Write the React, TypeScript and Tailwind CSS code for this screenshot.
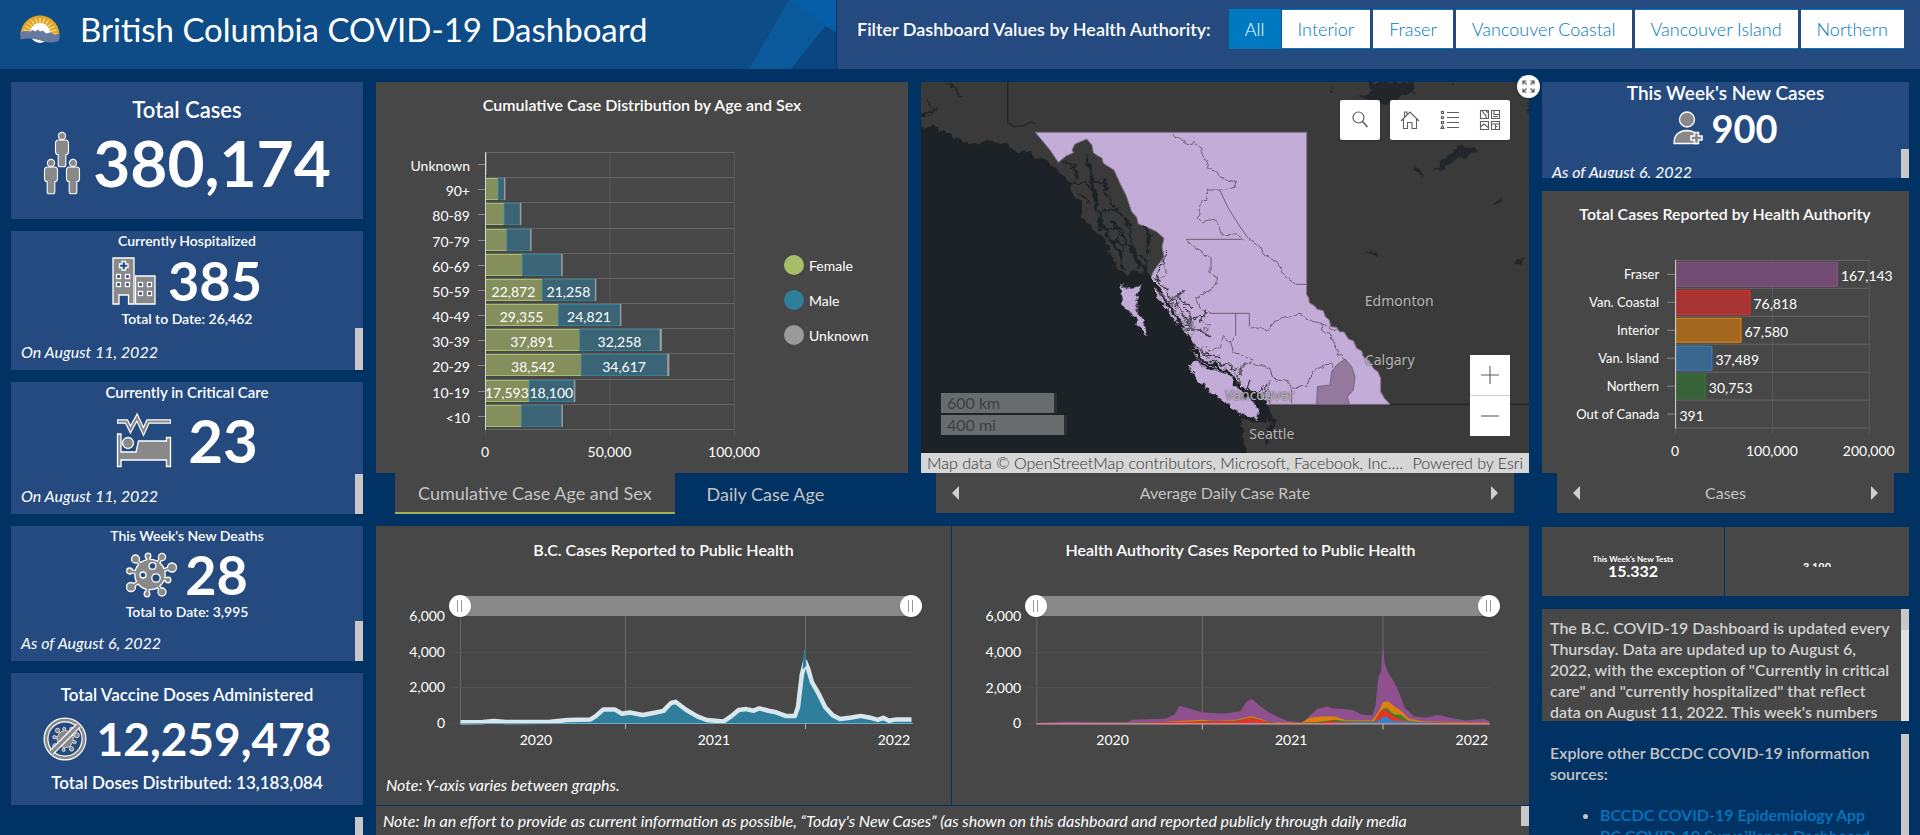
import React from "react";

type Pt = [number, number];

/* ---------- shared pieces ---------- */

function ScrollThumb({ className }: { className: string }) {
  return <div aria-hidden="true" className={"absolute right-0 w-2 bg-[#c8c8c8] " + className} />;
}

const iconStroke = { fill: "#898989", stroke: "#fff", strokeWidth: 1.3 };

function PersonShape({ x, y }: { x: number; y: number }) {
  return (
    <g transform={`translate(${x} ${y})`} {...iconStroke} strokeWidth={1.1}>
      <path d="M3.5 8h7q3 0 3 3.500v8q0 3-2.700 3.200v10q0 2-2 2h-3.600q-2 0-2-2v-10q-2.700-.2-2.700-3.200v-8q0-3.500 3-3.500z" />
      <circle cx="7" cy="4" r="3.600" />
    </g>
  );
}

function PeopleIcon() {
  return (
    <svg width="38" height="64" viewBox="0 0 38 64" aria-hidden="true">
      <PersonShape x={12} y={1} />
      <PersonShape x={1} y={28} />
      <PersonShape x={23} y={28} />
    </svg>
  );
}

function HospitalIcon() {
  const windows: Pt[] = [[4, 17], [13, 17], [4, 25], [13, 25], [26, 25], [35, 25], [26, 34], [35, 34]];
  return (
    <svg width="44" height="48" viewBox="0 0 44 48" aria-hidden="true">
      <g {...iconStroke}>
        <path d="M1 1h21v46h-5.500v-9h-9.500v9h-6z" />
        <path d="M23.500 19h19.500v28h-19.500z" />
      </g>
      <path d="M10 4.500h3.500v2.500h2.500v3.500h-2.500v2.500h-3.500v-2.500h-2.500v-3.500h2.500z" fill="#244a80" stroke="#fff" strokeWidth="1.300" />
      {windows.map(([x, y]) => (
        <rect key={`${x}-${y}`} x={x + 0.5} y={y + 0.5} width="4" height="4" fill="#244a80" stroke="#fff" strokeWidth="1.300" />
      ))}
    </svg>
  );
}

function CriticalIcon() {
  return (
    <svg width="56" height="56" viewBox="0 0 56 56" aria-hidden="true">
      <path d="M1 9.500h9.500l4 8 6.500-12 6.500 14 4.500-10h23" fill="none" stroke="#fff" strokeWidth="4.400" strokeLinejoin="miter" />
      <path d="M2 9.500h8.500l4 8 6.500-12 6.500 14 4.500-10h22" fill="none" stroke="#898989" strokeWidth="2" />
      <g {...iconStroke}>
        <path d="M1.500 22h3.500v18h15l2.500-11h28v-3.500h4v29h-4v-6.500h-45.500v6.500h-3.500z" />
        <circle cx="12" cy="31" r="5.500" />
      </g>
    </svg>
  );
}

function VirusShape({ dots = true }: { dots?: boolean }) {
  const knobs: [number, number, number][] = [
    [22, 4, 2.8], [36, 5, 3.6], [46, 15.500, 4.5], [42, 28, 2.8], [36, 40, 4],
    [21, 42, 2.8], [5, 35, 4.5], [3.6, 19, 3], [9.500, 7, 4],
  ];
  return (
    <g>
      {knobs.map(([x, y, r]) => (
        <g key={`${x}-${y}`}>
          <line x1="24" y1="22.500" x2={x} y2={y} stroke="#fff" strokeWidth="4" />
          <circle cx={x} cy={y} r={r} {...iconStroke} />
        </g>
      ))}
      <circle cx="24" cy="22.500" r="15.200" {...iconStroke} />
      {knobs.map(([x, y]) => (
        <line key={`i${x}`} x1="24" y1="22.500" x2={x} y2={y} stroke="#898989" strokeWidth="1.800" />
      ))}
      {dots && (
        <g fill="#244a80" stroke="#fff" strokeWidth="1.300">
          <circle cx="26.500" cy="14" r="3.400" />
          <circle cx="17" cy="23" r="3" />
          <circle cx="30" cy="26" r="4.200" />
        </g>
      )}
    </g>
  );
}

function VirusIcon() {
  return (
    <svg width="51" height="46" viewBox="0 0 51 46" aria-hidden="true">
      <VirusShape />
    </svg>
  );
}

function VaccineIcon() {
  return (
    <svg width="44" height="44" viewBox="0 0 44 44" aria-hidden="true">
      <g transform="translate(9.500 9.500) scale(.53 .56)">
        <VirusShape dots={false} />
      </g>
      <circle cx="22" cy="22" r="19" fill="none" stroke="#fff" strokeWidth="5" />
      <circle cx="22" cy="22" r="19" fill="none" stroke="#898989" strokeWidth="2.600" />
      <path d="M8.500 35.500l27-27" stroke="#fff" strokeWidth="6" />
      <path d="M8 36l28-28" stroke="#898989" strokeWidth="3.200" />
    </svg>
  );
}

function NewCaseIcon() {
  return (
    <svg width="30" height="34" viewBox="0 0 30 34" aria-hidden="true">
      <g {...iconStroke}>
        <circle cx="14" cy="8.500" r="7.500" />
        <path d="M1 32.500q0-12.500 13-13 9 .5 10 6v7z" />
      </g>
      <path d="M21.500 21.500h4v3.500h3.500v4h-3.500v3.500h-4v-3.500h-3.500v-4h3.500z" fill="#898989" stroke="#fff" strokeWidth="1.500" />
    </svg>
  );
}

function LogoIcon() {
  const rays = Array.from({ length: 13 }, (_, i) => (i * Math.PI) / 12);
  return (
    <svg width="40" height="28" viewBox="0 0 40 28" aria-hidden="true">
      <path d="M.5 20a19.500 19.500 0 0 1 39 0z" fill="#e3a521" />
      {rays.map((a) => (
        <line key={a} x1="20" y1="19" x2={20 - 17 * Math.cos(a)} y2={19 - 16 * Math.sin(a)} stroke="#fff3d0" strokeWidth="1" />
      ))}
      <circle cx="20" cy="18" r="10" fill="#fff" />
      <path d="M.5 17.500q5-3 9.500-1l3-1.500 2 1.500 3-2 2 2 3-1 3 3 4-1 5 2 4.500-1v5q0 3-4 3.500-8 1.500-15-1.500-10-3.500-20-1z" fill="#66799f" />
    </svg>
  );
}

/* ---------- left column ---------- */

type StatProps = {
  title: string;
  value: string;
  total?: string;
  note?: string;
  icon: React.ReactNode;
  titleClass: string;
  valueClass: string;
  totalClass?: string;
  thumb?: string;
};

function StatCard(p: StatProps) {
  return (
    <section className="relative flex min-h-0 flex-col overflow-hidden bg-[#244a80] text-white">
      <h2 className={"text-center font-semibold " + p.titleClass}>{p.title}</h2>
      <div className={"flex items-center justify-center font-bold " + p.valueClass}>
        {p.icon}
        <span>{p.value}</span>
      </div>
      {p.total && <p className={"text-center font-semibold " + (p.totalClass ?? "")}>{p.total}</p>}
      {p.note && <p className="mt-auto mb-1.5 pl-2.5 text-base leading-6 italic">{p.note}</p>}
      {p.thumb && <ScrollThumb className={p.thumb} />}
    </section>
  );
}

/* ---------- age and sex chart ---------- */

const ages: { label: string; f: number; m: number; u: number }[] = [
  { label: "Unknown", f: 0, m: 0, u: 300 },
  { label: "90+", f: 5100, m: 2500, u: 200 },
  { label: "80-89", f: 7500, m: 6500, u: 200 },
  { label: "70-79", f: 8600, m: 9500, u: 200 },
  { label: "60-69", f: 14900, m: 15700, u: 300 },
  { label: "50-59", f: 22872, m: 21258, u: 400 },
  { label: "40-49", f: 29355, m: 24821, u: 500 },
  { label: "30-39", f: 37891, m: 32258, u: 900 },
  { label: "20-29", f: 38542, m: 34617, u: 900 },
  { label: "10-19", f: 17593, m: 18100, u: 300 },
  { label: "<10", f: 14500, m: 16200, u: 300 },
];

function AgeChart() {
  const x0 = 109;
  const k = 249 / 100000;
  const top = 70;
  const row = 277 / 11;
  return (
    <svg viewBox="0 0 532 391" className="h-full w-full" role="img" aria-label="Cumulative Case Distribution by Age and Sex">
      <text x="266" y="29" textAnchor="middle" className="fill-white text-[16px] font-semibold">Cumulative Case Distribution by Age and Sex</text>
      {[0, 50000, 100000].map((v) => (
        <g key={v}>
          <line x1={x0 + v * k + 0.5} x2={x0 + v * k + 0.5} y1={top} y2="353" stroke="#5a5a5a" />
          <text x={x0 + v * k} y="375" textAnchor="middle" className="fill-white text-[14px]">{v.toLocaleString("en-US")}</text>
        </g>
      ))}
      {Array.from({ length: 12 }, (_, i) => (
        <line key={i} x1={x0} x2="358" y1={Math.round(top + i * row) + 0.5} y2={Math.round(top + i * row) + 0.5} stroke="#656565" />
      ))}
      {ages.map((a, i) => {
        const y = Math.round(top + i * row) + 1.5;
        const wf = a.f * k;
        const wm = a.m * k;
        return (
          <g key={a.label}>
            <line x1={x0 - 7} x2={x0} y1={y + 11} y2={y + 11} stroke="#8a8a8a" />
            <text x={x0 - 15} y={y + 17} textAnchor="end" className="fill-white text-[14px]">{a.label}</text>
            {a.f > 0 && <rect x={x0 + 0.5} y={y} width={wf} height="21" fill="#858e5d" stroke="#a8bd68" />}
            {a.m > 0 && <rect x={x0 + wf + 0.5} y={y} width={wm} height="21" fill="#3b6576" stroke="#2f7e9b" />}
            <rect x={x0 + wf + wm} y={y - 0.5} width={Math.max(1.5, a.u * k)} height="22" fill="#9a9a9a" />
            {a.f > 17000 && <text x={x0 + wf / 2} y={y + 17} textAnchor="middle" className="fill-white text-[14px]">{a.f.toLocaleString("en-US")}</text>}
            {a.m > 17000 && <text x={x0 + wf + wm / 2} y={y + 17} textAnchor="middle" className="fill-white text-[14px]">{a.m.toLocaleString("en-US")}</text>}
          </g>
        );
      })}
      <line x1={x0 + 0.5} x2={x0 + 0.5} y1={top} y2="348" stroke="#d6d6d6" />
      {[["Female", "#a8bd68"], ["Male", "#2f7e9b"], ["Unknown", "#9a9a9a"]].map(([label, color], i) => (
        <g key={label}>
          <circle cx="418" cy={183 + i * 35} r="10" fill={color} />
          <text x="433" y={189 + i * 35} className="fill-white text-[14px]">{label}</text>
        </g>
      ))}
    </svg>
  );
}

/* ---------- health authority chart ---------- */

const authorities: { label: string; v: number; fill: string; stroke: string }[] = [
  { label: "Fraser", v: 167143, fill: "#734c73", stroke: "#8b5289" },
  { label: "Van. Coastal", v: 76818, fill: "#a83432", stroke: "#ee2b27" },
  { label: "Interior", v: 67580, fill: "#a4671f", stroke: "#e8860f" },
  { label: "Van. Island", v: 37489, fill: "#3a678e", stroke: "#3484c4" },
  { label: "Northern", v: 30753, fill: "#386238", stroke: "#2f7a33" },
  { label: "Out of Canada", v: 391, fill: "#cccccc", stroke: "#cccccc" },
];

function AuthorityChart() {
  const x0 = 133;
  const k = 194 / 200000;
  return (
    <svg viewBox="0 0 367 282" className="h-full w-full" role="img" aria-label="Total Cases Reported by Health Authority">
      <text x="183" y="29" textAnchor="middle" className="fill-white text-[16px] font-semibold">Total Cases Reported by Health Authority</text>
      {[0, 100000, 200000].map((v) => (
        <g key={v}>
          <line x1={x0 + v * k + 0.5} x2={x0 + v * k + 0.5} y1="69" y2="244" stroke="#5a5a5a" />
          <text x={x0 + v * k} y="266" textAnchor="middle" className="fill-white text-[14px]">{v.toLocaleString("en-US")}</text>
        </g>
      ))}
      {Array.from({ length: 7 }, (_, i) => (
        <line key={i} x1={x0} x2="327" y1={69.5 + i * 28} y2={69.5 + i * 28} stroke="#656565" />
      ))}
      {authorities.map((a, i) => (
        <g key={a.label}>
          <line x1={x0 - 8} x2={x0} y1={83.5 + i * 28} y2={83.5 + i * 28} stroke="#8a8a8a" />
          <text x="117" y={88 + i * 28} textAnchor="end" className="fill-white text-[13px]">{a.label}</text>
          {a.v > 1000 && <rect x={x0 + 0.5} y={71.5 + i * 28} width={a.v * k} height="24" fill={a.fill} stroke={a.stroke} />}
          <text x={x0 + a.v * k + 4} y={90 + i * 28} className="fill-white text-[14px]">{a.v.toLocaleString("en-US")}</text>
        </g>
      ))}
      <line x1={x0 + 0.5} x2={x0 + 0.5} y1="69" y2="238" stroke="#d6d6d6" />
    </svg>
  );
}

/* ---------- time series charts ---------- */

/* x runs 0..1200 over the plot width, y is a case count */
const bcLine: Pt[] = [
  [0, 40], [60, 60], [90, 110], [120, 60], [240, 70], [285, 160], [345, 190], [360, 380], [380, 760], [410, 760],
  [430, 520], [450, 590], [485, 450], [520, 590], [540, 680], [560, 1120], [572, 1190], [600, 740], [630, 370],
  [655, 170], [700, 90], [720, 370], [740, 730], [760, 780], [780, 690], [795, 820], [820, 690], [840, 600],
  [865, 400], [890, 400], [898, 900], [908, 2700], [917, 3450], [925, 3050], [935, 2300], [955, 1560], [970, 900],
  [990, 440], [1010, 220], [1040, 310], [1065, 400], [1090, 300], [1110, 180], [1125, 290], [1140, 130], [1160, 200], [1200, 190],
];
const bcSpikes: Pt[] = [
  [895, 0], [900, 1900], [904, 2600], [910, 3000], [914, 4100], [918, 4100], [920, 3200], [935, 2600], [945, 2300],
  [955, 1800], [965, 1300], [980, 800], [1000, 0],
];
const stacks: { color: string; pts: Pt[] }[] = [
  {
    color: "#8f5090",
    pts: [
      [0, 20], [70, 90], [115, 90], [240, 60], [255, 200], [340, 250], [365, 480], [378, 980], [395, 880], [420, 730],
      [440, 620], [470, 560], [500, 550], [540, 680], [555, 1200], [570, 1380], [590, 1000], [615, 630], [635, 400],
      [665, 130], [705, 70], [725, 450], [745, 820], [770, 950], [785, 830], [810, 820], [840, 730], [860, 500],
      [890, 440], [898, 1000], [906, 2600], [913, 2900], [916, 4100], [919, 4100], [922, 3400], [930, 2900],
      [945, 2400], [960, 1750], [975, 900], [1000, 390], [1030, 310], [1065, 480], [1090, 350], [1135, 160], [1185, 260], [1200, 110],
    ],
  },
  {
    color: "#dd8208",
    pts: [
      [0, 10], [310, 30], [370, 130], [440, 200], [470, 150], [520, 180], [550, 300], [570, 410], [590, 260], [620, 80],
      [700, 30], [725, 310], [755, 380], [790, 380], [820, 170], [890, 170], [905, 630], [918, 1190], [932, 1230],
      [950, 920], [965, 720], [985, 290], [1020, 110], [1200, 30],
    ],
  },
  {
    color: "#3a7d35",
    pts: [
      [0, 0], [400, 60], [440, 130], [520, 130], [570, 330], [600, 140], [640, 20], [740, 60], [790, 200], [820, 110],
      [895, 110], [912, 700], [928, 880], [940, 620], [950, 500], [965, 480], [985, 150], [1020, 60], [1200, 10],
    ],
  },
  {
    color: "#ee2f22",
    pts: [
      [0, 20], [270, 20], [370, 90], [530, 120], [560, 290], [580, 240], [620, 40], [750, 40], [780, 130], [830, 50],
      [895, 80], [910, 620], [925, 780], [940, 480], [955, 300], [975, 180], [990, 30], [1200, 30],
    ],
  },
  {
    color: "#2e86cc",
    pts: [[560, 0], [570, 60], [590, 0], [770, 0], [800, 50], [900, 90], [915, 320], [927, 400], [940, 160], [1010, 60], [1100, 0]],
  },
];

const px = (x: number) => 84.5 + (x * 451) / 1200;
const py = (v: number) => 107 - (v * 107) / 6000 + 1;
const toPoints = (pts: Pt[]) => pts.map(([x, v]) => `${px(x).toFixed(1)},${py(v).toFixed(1)}`).join(" ");
const toArea = (pts: Pt[]) => `${px(pts[0][0])},108 ${toPoints(pts)} ${px(pts[pts.length - 1][0])},108`;

const thumbClass =
  "pointer-events-none absolute inset-0 m-0 w-full appearance-none bg-transparent [&::-webkit-slider-thumb]:pointer-events-auto [&::-webkit-slider-thumb]:size-[22px] [&::-webkit-slider-thumb]:appearance-none [&::-webkit-slider-thumb]:rounded-full [&::-webkit-slider-thumb]:bg-white [&::-webkit-slider-thumb]:bg-[linear-gradient(90deg,transparent_8px,#999_8px,#999_9px,transparent_9px,transparent_12px,#999_12px,#999_13px,transparent_13px)] [&::-webkit-slider-thumb]:bg-[length:22px_12px] [&::-webkit-slider-thumb]:bg-center [&::-webkit-slider-thumb]:bg-no-repeat [&::-webkit-slider-thumb]:shadow";

function SeriesPanel({ title, note, children }: { title: string; note?: string; children: React.ReactNode }) {
  return (
    <section className="flex min-w-0 flex-col overflow-hidden bg-[#474747] text-white">
      <h2 className="pt-3 text-center text-base leading-6 font-semibold">{title}</h2>
      <div className="relative mr-[5%] ml-[12.7%] mt-8 h-6">
        <div className="absolute inset-x-[11px] top-0.5 h-5 bg-[#898989]" />
        <input type="range" min={0} max={100} defaultValue={0} aria-label={title + " range start"} className={thumbClass} />
        <input type="range" min={0} max={100} defaultValue={100} aria-label={title + " range end"} className={thumbClass} />
      </div>
      <svg viewBox="0 0 575 140" className="-mt-[3px] w-full shrink-0 overflow-visible" role="img" aria-label={title}>
        {[249, 429].map((x) => (
          <line key={x} x1={x + 0.5} x2={x + 0.5} y1="0" y2="114" stroke="#6e6e6e" />
        ))}
        <line x1="84.500" x2="84.500" y1="0" y2="108" stroke="#666" />
        {[6000, 4000, 2000, 0].map((v) => (
          <g key={v}>
            {v < 6000 && <line x1="77" x2="536" y1={Math.round(py(v)) + 0.5} y2={Math.round(py(v)) + 0.5} stroke="#525252" />}
            <text x="69" y={py(v) + 5} textAnchor="end" className="fill-white text-[14px]">{v.toLocaleString("en-US")}</text>
          </g>
        ))}
        {children}
        {[249, 429].map((x) => (
          <line key={x} x1={x + 0.5} x2={x + 0.5} y1="108" y2="114" stroke="#b0b0b0" />
        ))}
        <text x="160" y="130" textAnchor="middle" className="fill-white text-[14px]">2020</text>
        <text x="338" y="130" textAnchor="middle" className="fill-white text-[14px]">2021</text>
        <text x="518" y="130" textAnchor="middle" className="fill-white text-[14px]">2022</text>
      </svg>
      {note && <p className="mt-auto mb-2 pl-2.5 text-base leading-6 italic">{note}</p>}
    </section>
  );
}

/* ---------- map ---------- */

function ProvinceMap() {
  return (
    <svg viewBox="0 0 1824 1173" preserveAspectRatio="xMidYMin slice" className="absolute inset-0 h-full w-full" role="img" aria-label="Map of British Columbia">
      <defs>
        <filter id="coast" x="-5%" y="-5%" width="110%" height="110%">
          <feTurbulence type="fractalNoise" baseFrequency="0.045" numOctaves="3" seed="4" />
          <feDisplacementMap in="SourceGraphic" scale="26" xChannelSelector="R" yChannelSelector="G" />
        </filter>
        <filter id="border" x="-5%" y="-5%" width="110%" height="110%">
          <feTurbulence type="fractalNoise" baseFrequency="0.05" numOctaves="2" seed="9" />
          <feDisplacementMap in="SourceGraphic" scale="16" xChannelSelector="R" yChannelSelector="G" />
        </filter>
      </defs>
      <rect width="1824" height="1173" fill="#393a39" />
      <path d="M260 0V122l20 12 30-4 20-10 14 6" fill="none" stroke="#222627" strokeWidth="4" />
      <g transform="translate(357 144)">
        <path d="M690 823H1470" stroke="#252829" strokeWidth="5" />
        <path d="M-14 7H800V495L806 502 808 518 824 528 832 538 850 542 856 560 868 570 872 590 890 592 898 605 912 606 926 628 940 632 950 655 965 663 970 680 988 692 1000 715 1014 726 1022 745 1022 785 1034 806 1050 823H640L560 745 470 690 445 620 400 570 340 500 330 450 340 425 372 380 366 350 372 325 350 305 318 290 295 282 290 262 275 245 258 195 240 160 222 120 190 100 186 84 174 78 160 68 156 45 140 27 105 42 96 60 100 68 78 78 55 97 30 60Z" fill="#c4acd9" stroke="#807488" strokeWidth="3" />
        <g filter="url(#coast)">
          <path d="M-370-65-350-10-320-14-300 0-250 20-225 38-190 42-140 32-100 45-65 70-30 62-20 84 0 82 50 118 82 150 95 165 95 192 120 220 128 262 150 285 172 312 195 325 212 370 225 402 245 425 265 432 290 420 325 430 345 455 345 495 370 530 400 565 430 590 450 615 455 660 475 695 520 715 570 732 600 765 640 790 680 815 690 850 680 880 640 870 600 870 605 915 622 970 640 1040H-370Z" fill="#1e2426" />
        </g>
        <g filter="url(#coast)" fill="none" stroke="#1e2426" strokeLinecap="round" strokeLinejoin="round">
          <path d="M75 98 105 110 115 145M140 75 155 130 165 190 175 240 180 300M165 158 190 160M100 165 140 155 160 200M120 190 150 220M195 145 200 190 215 220 230 240M180 250 210 235 250 255 270 290M200 300 240 300 260 330 250 370M270 300 275 340 290 375 295 410M310 290 330 320 325 370M225 330 250 345M215 270 235 310 225 350M300 380 320 390 318 415" strokeWidth="6" />
          <path d="M150 110 158 170 170 230M178 270 205 320 240 370 250 410M265 340 290 390 320 425" strokeWidth="9" />
          <path d="M345 460 385 530 425 580 455 640 480 690 560 722 600 770 650 800" strokeWidth="10" />
          <path d="M-270-140-240-100M-340-90-310-60-350-40M-360-40-325-50" strokeWidth="5" />
          <path d="M680 830 690 860 695 890 685 900M700 870 692 915 680 935" strokeWidth="9" />
          <path d="M600 845 640 868 680 860" strokeWidth="18" />
        </g>
        <g filter="url(#coast)" fill="none" stroke="#3d3f42" strokeWidth="4" strokeLinecap="round" strokeLinejoin="round">
          <path d="M380 365 372 400 350 430 360 460M345 440 395 500 425 545 450 590M350 480 400 525M385 515 420 490 430 485M405 500 460 530M430 570 500 560M440 600 480 600 510 620M460 640 490 670 540 680M470 690 520 695 590 715M600 760 600 720 620 700M625 780 632 745M655 790 670 770M670 800 680 760M500 540 480 580M430 530 450 550 445 600" />
        </g>
        <g filter="url(#coast)" fill="none" stroke="#77707c" strokeWidth="3">
          <path d="M378 370 365 400 380 425 360 445M350 480 380 500 400 540 430 560 440 590M400 560 415 520 405 500 430 490M415 585 440 560 450 590 460 570M430 600 465 590 455 620M485 570 510 590 490 600M465 660 500 650 500 680 530 690M550 720 570 700 590 730 585 750" />
        </g>
        <g filter="url(#coast)" fill="#c4acd9" stroke="#8b7e94" strokeWidth="2">
          <path d="M445 702 470 696 500 718 545 724 572 742 592 772 612 795 640 815 658 848 650 866 600 850 560 818 520 790 490 765 465 738Z" />
          <path d="M242 466 270 474 300 468 290 495 288 530 298 555 315 590 328 620 312 608 292 580 276 548 258 540 248 510Z" />
          <path d="M350 492 362 500 375 530 362 522ZM390 545 405 560 400 575ZM430 595 445 605 440 618Z" />
        </g>
        <path d="M830 823 832 770 870 765 875 725 890 705 915 687 935 710 945 740 940 780 922 800 928 823Z" fill="#94799f" stroke="#75647e" strokeWidth="3" />
        <g fill="none" stroke="#6a6172" strokeWidth="3">
          <path d="M438 328H607M510 550H628V590M587 550V618M768 463H800M540 182 565 235 600 290 625 325" />
          <g filter="url(#border)">
            <path d="M398 7 405 22 430 30 435 42 465 38 485 55 492 85 503 90 500 115 530 125 545 145 590 158 585 172 545 180 505 180 500 205 480 225 475 265 485 275 520 268 535 285 545 318 585 308 607 325" />
            <path d="M438 328 450 345 480 360 510 385 510 430 532 440 530 465 490 490 470 505 482 535 510 550" />
            <path d="M625 325 655 345 680 378 715 400 735 440 768 463M628 590 660 592 680 603 705 575 745 560 780 550 800 570 845 580 850 605 870 610 885 645 895 672 915 687" />
            <path d="M587 618 572 635 550 620 540 655 510 662 490 680M572 635 580 665 640 692 600 710M640 700 690 715 700 748 745 755 755 775 800 768 812 735 850 705 875 702 880 712M690 750 680 770 688 790 690 823M752 775 755 823M845 580 870 598 880 600 890 595" />
          </g>
        </g>
      </g>
      <g filter="url(#coast)" fill="#22282a">
        <path d="M1345 0H1475L1480 40 1440 35 1410 70 1340 55 1310 45 1345 35ZM1230 15 1245 30 1235 35ZM1540 265 1580 220 1620 185 1650 200 1680 205 1630 225 1600 235 1560 262ZM1480 245 1500 255 1500 290 1485 270ZM1715 370 1745 345 1735 365ZM1325 512 1370 512 1375 522ZM1780 535 1810 525 1800 550ZM1595 0 1605 12 1600 18ZM1815 80 1824 60 1824 100Z" />
      </g>
    </svg>
  );
}

const cities = [
  { name: "Edmonton", cls: "left-[73%] top-[54%]" },
  { name: "Calgary", cls: "left-[73%] top-[69%]" },
  { name: "Vancouver", cls: "left-[50%] top-[78%] text-[#8d8593]" },
  { name: "Seattle", cls: "left-[54%] top-[88%]" },
];

const toolButton = "flex size-10 cursor-pointer items-center justify-center bg-white";

function MapPanel() {
  return (
    <div className="relative">
      <div className="absolute inset-0 overflow-hidden bg-[#393a39]">
        <ProvinceMap />
        {cities.map((c) => (
          <span key={c.name} className={"absolute font-['Noto_Sans',sans-serif] text-sm leading-4 text-[#b4b4b4] [text-shadow:0_0_2px_#333] " + c.cls}>
            {c.name}
          </span>
        ))}
        <div className="absolute top-[18px] right-[19px] flex gap-2.5">
          <button className={toolButton + " rounded-xs shadow"} aria-label="Search">
            <svg width="18" height="18" viewBox="0 0 18 18" fill="none" stroke="#5e5e5e" strokeWidth="1.200" aria-hidden="true">
              <circle cx="7.500" cy="6.500" r="5.500" />
              <path d="M11.500 10.500l5 5.500" strokeWidth="1.600" />
            </svg>
          </button>
          <div className="flex overflow-hidden rounded-xs shadow">
            <button className={toolButton} aria-label="Home">
              <svg width="20" height="20" viewBox="0 0 20 20" fill="none" stroke="#5e5e5e" strokeWidth="1.100" aria-hidden="true">
                <path d="M1 11l9-9 9 9M3.500 9v9.500h4v-6h4.500v6h4.500v-9.500M4.500 7.500v-5.500h2.500v3" />
              </svg>
            </button>
            <button className={toolButton} aria-label="Legend">
              <svg width="20" height="20" viewBox="0 0 20 20" fill="none" stroke="#5e5e5e" strokeWidth="1.200" aria-hidden="true">
                <path d="M7 2.500h12M7 7.500h12M7 12.500h12M7 17.500h12" />
                <path d="M1.500 1.500h2v2h-2zM1.500 11.500h2v2h-2zM1 18.500l1.500-3 1.500 3z" />
                <circle cx="2.500" cy="7.500" r="1.200" />
              </svg>
            </button>
            <button className={toolButton} aria-label="Basemap gallery">
              <svg width="22" height="22" viewBox="0 0 22 22" fill="none" stroke="#5e5e5e" strokeWidth="1.100" aria-hidden="true">
                <path d="M1.500 1.500h8v8h-8zM12.500 1.500h8v8h-8zM1.500 12.500h8v8h-8zM12.500 12.500h8v8h-8z" />
                <path d="M3 1.500l2 3 1.500 1 1 4M7 2l2.500 2M15 2v3.500h5M14 7.500h5M2 17.500l3-2.500 2 1.500 2 2M13 15h7M16.500 15v5M16.500 17.500h2" />
              </svg>
            </button>
          </div>
        </div>
        <div className="absolute bottom-[38px] left-5 flex flex-col gap-0.5 text-base leading-5 text-[#3c3f40]">
          <div className="w-[116px] border-r-[3px] border-[#2c3031] bg-[#686c6d] pl-1.5">600 km</div>
          <div className="w-[126px] border-r-[3px] border-[#2c3031] bg-[#686c6d] pl-1.5">400 mi</div>
        </div>
        <div className="absolute right-[19px] bottom-[37px] flex flex-col gap-px bg-[#d0d0d0]">
          <button className={toolButton} aria-label="Zoom in">
            <svg width="20" height="20" viewBox="0 0 20 20" stroke="#5e5e5e" strokeWidth="1.100" aria-hidden="true"><path d="M1 10h18M10 1v18" /></svg>
          </button>
          <button className={toolButton} aria-label="Zoom out">
            <svg width="20" height="20" viewBox="0 0 20 20" stroke="#5e5e5e" strokeWidth="1.100" aria-hidden="true"><path d="M1 10h18" /></svg>
          </button>
        </div>
        <div className="absolute inset-x-0 bottom-0 flex h-5 items-center justify-between bg-[#d5d6d5] px-1.5 text-base leading-5 font-light text-[#323232]">
          <span>Map data © OpenStreetMap contributors, Microsoft, Facebook, Inc.…</span>
          <span>Powered by Esri</span>
        </div>
      </div>
      <button className="absolute -top-[7px] -right-[11px] z-10 flex size-[23px] items-center justify-center rounded-full bg-white shadow" aria-label="Expand map">
        <svg width="13" height="13" viewBox="0 0 13 13" fill="none" stroke="#555" strokeWidth="1.200" aria-hidden="true">
          <path d="M1 4.500V1h3.500M1 1l3.500 3.500M8.500 1H12v3.500M12 1L8.500 4.500M1 8.500V12h3.500M1 12l3.500-3.500M12 8.500V12H8.500M12 12L8.500 8.500" />
        </svg>
      </button>
    </div>
  );
}

function Pager({ label }: { label: string }) {
  return (
    <div className="mx-[15px] flex h-10 items-center justify-between bg-[#474747] px-4 text-base text-[#c4c4c4]">
      <button className="flex h-10 items-center" aria-label={"Previous, " + label}>
        <svg width="7" height="14" viewBox="0 0 7 14" aria-hidden="true"><path d="M7 0v14L0 7z" fill="#cfcfcf" /></svg>
      </button>
      <span>{label}</span>
      <button className="flex h-10 items-center" aria-label={"Next, " + label}>
        <svg width="7" height="14" viewBox="0 0 7 14" aria-hidden="true"><path d="M0 0v14l7-7z" fill="#cfcfcf" /></svg>
      </button>
    </div>
  );
}

/* ---------- page ---------- */

const filters = ["All", "Interior", "Fraser", "Vancouver Coastal", "Vancouver Island", "Northern"];

export default function App() {
  return (
    <div className="flex h-screen flex-col overflow-hidden bg-[#003264] font-['Lato',sans-serif]">
      <header className="grid h-[69px] shrink-0 grid-cols-[836fr_1083fr] gap-px">
        <div className="relative flex overflow-hidden bg-[#0d4c86] pt-[7px] pl-5">
          <svg viewBox="0 0 90 69" className="absolute top-0 right-0 h-full" aria-hidden="true">
            <path d="M90 0v69H44L78 29z" fill="#0c4680" />
            <path d="M43 0L3 69h42L79 26z" fill="#0a599a" />
            <path d="M43 0h47v32L79 26z" fill="#065ea6" />
          </svg>
          <span className="pt-2"><LogoIcon /></span>
          <h1 className="ml-5 text-[33px] leading-11 text-white">British Columbia COVID-19 Dashboard</h1>
        </div>
        <div className="flex items-start justify-between bg-[#244a80] pt-[9px] pr-4 pl-5">
          <span className="text-lg leading-10 font-semibold text-white">Filter Dashboard Values by Health Authority:</span>
          <div className="flex gap-[3px]">
            {filters.map((f, i) => (
              <button
                key={f}
                className={
                  "h-10 cursor-pointer border-y border-[#0079c1] px-4 text-lg font-light whitespace-nowrap " +
                  (i === 0 ? "-mr-0.5 bg-[#0079c1] text-white" : "bg-white text-[#0079c1]")
                }
              >
                {f}
              </button>
            ))}
          </div>
        </div>
      </header>

      <main className="grid min-h-0 flex-1 grid-cols-[352fr_1153fr_367fr] gap-[13px] px-[11px] pt-[13px]">
        <div className="grid min-h-0 grid-rows-[137fr_139fr_132fr_135fr_132fr_18fr] gap-3">
          <StatCard
            title="Total Cases" value="380,174" icon={<PeopleIcon />}
            titleClass="pt-3 text-[22px] leading-8" valueClass="gap-3 text-[64px] leading-[74px]"
          />
          <StatCard
            title="Currently Hospitalized" value="385" icon={<HospitalIcon />} total="Total to Date: 26,462" note="On August 11, 2022"
            titleClass="text-[14px] leading-5" valueClass="gap-3 text-[54px] leading-[60px]" totalClass="text-[14px] leading-4" thumb="bottom-0 h-[42px]"
          />
          <StatCard
            title="Currently in Critical Care" value="23" icon={<CriticalIcon />} note="On August 11, 2022"
            titleClass="text-[15px] leading-5" valueClass="gap-4 text-[60px] leading-[76px]" thumb="bottom-0 h-10"
          />
          <StatCard
            title="This Week's New Deaths" value="28" icon={<VirusIcon />} total="Total to Date: 3,995" note="As of August 6, 2022"
            titleClass="text-[14px] leading-5" valueClass="gap-2 text-[54px] leading-[58px]" totalClass="text-[14px] leading-4" thumb="bottom-0 h-10"
          />
          <StatCard
            title="Total Vaccine Doses Administered" value="12,259,478" icon={<VaccineIcon />} total="Total Doses Distributed: 13,183,084"
            titleClass="pt-2.5 text-[17px] leading-6" valueClass="gap-2.5 text-[46px] leading-[64px]" totalClass="text-[17px] leading-6"
          />
          <div className="relative"><ScrollThumb className="inset-y-0" /></div>
        </div>

        <div className="grid min-h-0 grid-rows-[432fr_309fr] gap-3">
          <div className="grid min-h-0 grid-cols-[532fr_608fr] gap-[13px]">
            <div className="flex min-h-0 flex-col">
              <section className="min-h-0 flex-1 bg-[#474747]"><AgeChart /></section>
              <div className="flex gap-3 pl-[19px]">
                <button className="h-[41px] border-b-2 border-[#9db158] bg-[#474747] px-[23px] text-lg text-[#c4c4c4]">Cumulative Case Age and Sex</button>
                <button className="h-[41px] px-5 text-lg text-[#c4c4c4]">Daily Case Age</button>
              </div>
            </div>
            <div className="flex min-h-0 flex-col pb-px">
              <div className="grid min-h-0 flex-1"><MapPanel /></div>
              <Pager label="Average Daily Case Rate" />
            </div>
          </div>
          <div className="grid min-h-0 grid-rows-[279fr_29fr] gap-px">
            <div className="grid min-h-0 grid-cols-[575fr_577fr] gap-px">
              <SeriesPanel title="B.C. Cases Reported to Public Health" note="Note: Y-axis varies between graphs.">
                <polygon points={toArea(bcLine)} fill="#2f7e9b" />
                <polyline points={toPoints(bcLine)} fill="none" stroke="#d9e7ec" strokeWidth="4.500" strokeLinejoin="round" />
                <polygon points={toPoints(bcSpikes.slice(3, 7))} fill="#2f7e9b" />
                <line x1="84" x2="537" y1="108.500" y2="108.500" stroke="#6fb0c8" />
              </SeriesPanel>
              <SeriesPanel title="Health Authority Cases Reported to Public Health">
                {stacks.map((s) => (
                  <polygon key={s.color} points={toArea(s.pts)} fill={s.color} />
                ))}
                <line x1="84" x2="536" y1="108.500" y2="108.500" stroke="#d79aa8" />
              </SeriesPanel>
            </div>
            <div className="relative overflow-hidden bg-[#474747] pt-1 pr-14 pl-[7px] text-base leading-[22px] text-white italic">
              Note: In an effort to provide as current information as possible, “Today's New Cases” (as shown on this dashboard and reported publicly through daily media statements) may include slight differences as compared to the numbers shown on the Sunday. Four News of a loaded
              <ScrollThumb className="top-0 h-5" />
            </div>
          </div>
        </div>

        <div className="grid min-h-0 grid-rows-[96fr_322fr_69fr_112fr_101fr] gap-[13px]">
          <section className="relative flex flex-col overflow-hidden bg-[#244a80] text-white">
            <h2 className="text-center text-[19px] leading-[22px] font-semibold">This Week's New Cases</h2>
            <div className="flex items-center justify-center gap-2 text-[38px] leading-[48px] font-bold">
              <NewCaseIcon />
              <span>900</span>
            </div>
            <p className="mt-2 pl-2.5 text-base leading-6 whitespace-nowrap italic">As of August 6, 2022</p>
            <ScrollThumb className="bottom-0 h-[29px]" />
          </section>
          <div className="flex min-h-0 flex-col pb-px">
            <section className="min-h-0 flex-1 bg-[#474747]"><AuthorityChart /></section>
            <Pager label="Cases" />
          </div>
          <div className="grid min-h-0 grid-cols-[182fr_184fr] gap-px text-center font-bold text-white">
            <div className="flex flex-col items-center bg-[#474747] pt-7">
              <h2 className="h-[7px] overflow-hidden text-[8px] leading-2">This Week's New Tests</h2>
              <p className="mt-0.5 h-[13px] overflow-hidden text-base leading-[14px]">15,332</p>
            </div>
            <div className="flex flex-col items-center bg-[#474747] pt-9">
              <p className="h-1 overflow-hidden text-[11px] leading-2">3,190</p>
            </div>
          </div>
          <section className="relative overflow-hidden bg-[#474747] pt-2 pr-4 pl-2 text-base leading-[21px] font-semibold text-[#d1d1d1]">
            The B.C. COVID-19 Dashboard is updated every Thursday. Data are updated up to August 6, 2022, with the exception of "Currently in critical care" and "currently hospitalized" that reflect data on August 11, 2022. This week's numbers
            <div aria-hidden="true" className="absolute inset-y-0 right-0 w-2 bg-[#e0e0e0]" />
            <ScrollThumb className="top-0 h-[21px]" />
          </section>
          <section className="relative overflow-hidden pt-2 pr-4 pl-2 text-base leading-[21px] font-semibold text-[#c4c4c4]">
            <p>Explore other BCCDC COVID-19 information sources:</p>
            <ul className="mt-5 list-disc pl-[50px] whitespace-nowrap">
              <li><a href="#epi" className="text-[#0079c1]">BCCDC COVID-19 Epidemiology App</a></li>
              <li><a href="#surveillance" className="text-[#0079c1]">BC COVID-19 Surveillance Dashboard</a></li>
            </ul>
            <ScrollThumb className="inset-y-0" />
          </section>
        </div>
      </main>
    </div>
  );
}
